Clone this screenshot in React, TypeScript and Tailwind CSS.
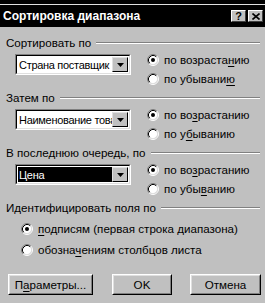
import React from 'react';

const font = { fontFamily: '"Liberation Sans", Arial, sans-serif' };

// classic sunken radio
const Radio: React.FC<{ checked?: boolean }> = ({ checked }) => (
  <svg width="12" height="12" viewBox="0 0 12 12" className="shrink-0">
    <circle cx="6" cy="6" r="4.5" fill="#fff" />
    <path d="M2.11 9.89 A5.5 5.5 0 0 1 9.89 2.11" stroke="#808080" fill="none" />
    <path d="M2.11 9.89 A5.5 5.5 0 0 0 9.89 2.11" stroke="#fff" fill="none" />
    <path d="M2.82 9.18 A4.5 4.5 0 0 1 9.18 2.82" stroke="#000" fill="none" />
    <path d="M2.82 9.18 A4.5 4.5 0 0 0 9.18 2.82" stroke="#dfdfdf" fill="none" />
    {checked && <circle cx="6" cy="6" r="2" fill="#000" />}
  </svg>
);

const U: React.FC<{ children: React.ReactNode }> = ({ children }) => (
  <span className="underline underline-offset-[2px] decoration-1">{children}</span>
);

const Header: React.FC<{ label: string }> = ({ label }) => (
  <div className="flex items-center h-[14px]">
    <span className="whitespace-nowrap">{label}</span>
    <div className="flex-1 ml-[5px] mr-[5px] border-t border-t-[#808080] border-b border-b-white" />
  </div>
);

const Select: React.FC<{ value: string; active?: boolean }> = ({ value, active }) => (
  <div className="w-[116px] h-[21px] border border-t-[#808080] border-l-[#808080] border-b-white border-r-white">
    <div className="h-full border border-t-black border-l-black border-b-[#dfdfdf] border-r-[#dfdfdf] bg-white flex p-[1px]">
      <div
        className={`flex-1 flex items-center pl-[1px] overflow-hidden whitespace-nowrap text-[11px] tracking-[-0.3px] ${
          active ? 'bg-black text-white' : 'text-black'
        }`}
      >
        {value}
      </div>
      <div className="w-[16px] h-full bg-[#c0c0c0] border border-t-[#dfdfdf] border-l-[#dfdfdf] border-b-black border-r-black flex items-center justify-center">
        <svg width="7" height="4" viewBox="0 0 7 4">
          <path d="M0 0h7L3.5 4z" fill="#000" />
        </svg>
      </div>
    </div>
  </div>
);

const RadioRow: React.FC<{ checked?: boolean; children: React.ReactNode; h?: string }> = ({ checked, children, h = 'h-[19px]' }) => (
  <div className={`flex items-center gap-[5px] ${h}`}>
    <Radio checked={checked} />
    <span className="whitespace-nowrap">{children}</span>
  </div>
);

const SortSection: React.FC<{
  label: string;
  value: string;
  active?: boolean;
  asc: React.ReactNode;
  desc: React.ReactNode;
}> = ({ label, value, active, asc, desc }) => (
  <div>
    <Header label={label} />
    <div className="flex">
      <div className="ml-[9px] mt-[4px]">
        <Select value={value} active={active} />
      </div>
      <div className="ml-[16px] flex flex-col">
        <RadioRow checked>{asc}</RadioRow>
        <RadioRow>{desc}</RadioRow>
      </div>
    </div>
  </div>
);

const Button: React.FC<{ w: string; children: React.ReactNode }> = ({ w, children }) => (
  <div className={`${w} h-[21px] border border-t-white border-l-white border-b-black border-r-black`}>
    <div className="h-full border border-t-[#dfdfdf] border-l-[#dfdfdf] border-b-[#808080] border-r-[#808080] flex items-center justify-center">
      {children}
    </div>
  </div>
);

const App: React.FC = () => {
  return (
    <div className="w-[265px] h-[303px] bg-[#c0c0c0] text-[11.6px] leading-[14px] text-black overflow-hidden" style={font}>
      <div className="h-[4px] bg-black" />
      <div className="h-[1px] bg-[#dfdfdf]" />
      <div className="h-[22px] bg-black flex items-center pl-[3px] pr-[2px]">
        <span className="text-white font-bold text-[12px] flex-1">Сортировка диапазона</span>
        <div className="flex gap-[2px]">
          <div className="w-[15px] h-[12px] bg-[#c0c0c0] border border-t-white border-l-white border-b-[#404040] border-r-[#404040] flex items-center justify-center font-bold text-[11px] leading-none">
            ?
          </div>
          <div className="w-[15px] h-[12px] bg-[#c0c0c0] border border-t-white border-l-white border-b-[#404040] border-r-[#404040] flex items-center justify-center">
            <svg width="8" height="7" viewBox="0 0 8 7">
              <path d="M0.5 0.5L7.5 6.5M7.5 0.5L0.5 6.5" stroke="#000" strokeWidth="1.6" />
            </svg>
          </div>
        </div>
      </div>
      <div className="pl-[6px] pt-[9px] flex flex-col gap-[3px]">
        <SortSection
          label="Сортировать по"
          value="Страна поставщик"
          asc={<>по возраста<U>н</U>ию</>}
          desc={<>по убывани<U>ю</U></>}
        />
        <SortSection
          label="Затем по"
          value="Наименование това"
          asc={<>по во<U>з</U>растанию</>}
          desc={<>по у<U>б</U>ыванию</>}
        />
        <SortSection
          label="В последнюю очередь, по"
          value="Цена"
          active
          asc={<>по во<U>з</U>растанию</>}
          desc={<>по убы<U>в</U>анию</>}
        />
        <div>
          <Header label="Идентифицировать поля по" />
          <div className="ml-[15px] mt-[3px] flex flex-col">
            <RadioRow checked h="h-[21px]">
              <U>п</U>одписям (первая строка диапазона)
            </RadioRow>
            <RadioRow h="h-[21px]">
              обозна<U>ч</U>ениям столбцов листа
            </RadioRow>
          </div>
        </div>
        <div className="flex mt-[11px] ml-[2px]">
          <Button w="w-[85px]">
            <span>П<U>а</U>раметры...</span>
          </Button>
          <div className="ml-[19px]">
            <Button w="w-[60px]">OK</Button>
          </div>
          <div className="ml-[18px]">
            <Button w="w-[71px]">Отмена</Button>
          </div>
        </div>
      </div>
    </div>
  );
};

export default App;
